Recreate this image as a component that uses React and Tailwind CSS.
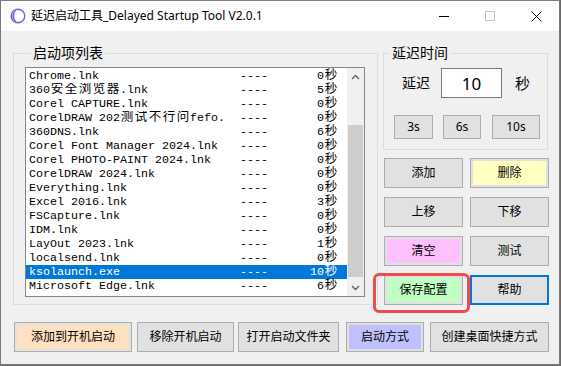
import React from "react";

const items = [
  { name: "Chrome.lnk", sec: 0 },
  { name: "360安全浏览器.lnk", sec: 5 },
  { name: "Corel CAPTURE.lnk", sec: 0 },
  { name: "CorelDRAW 202测试不行问fefo.", sec: 0 },
  { name: "360DNS.lnk", sec: 6 },
  { name: "Corel Font Manager 2024.lnk", sec: 0 },
  { name: "Corel PHOTO-PAINT 2024.lnk", sec: 0 },
  { name: "CorelDRAW 2024.lnk", sec: 0 },
  { name: "Everything.lnk", sec: 0 },
  { name: "Excel 2016.lnk", sec: 3 },
  { name: "FSCapture.lnk", sec: 0 },
  { name: "IDM.lnk", sec: 0 },
  { name: "LayOut 2023.lnk", sec: 1 },
  { name: "localsend.lnk", sec: 0 },
  { name: "ksolaunch.exe", sec: 10, selected: true },
  { name: "Microsoft Edge.lnk", sec: 6 },
];

// wide (CJK) glyphs take two cells in the listbox font
const Mono = ({ text }) =>
  Array.from(text).map((ch, i) =>
    ch.charCodeAt(0) > 0x2e80 ? (
      <span key={i} className="inline-block w-[14px] text-center text-[12.5px]">
        {ch}
      </span>
    ) : (
      <React.Fragment key={i}>{ch}</React.Fragment>
    )
  );

const Btn = ({ children, className = "", fill = "" }) => (
  <button className={`flex items-center justify-center border border-[#adadad] bg-[#e1e1e1] p-[2px] text-[12px] leading-none text-black ${className}`}>
    <span className={`flex h-full w-full items-center justify-center ${fill}`}>{children}</span>
  </button>
);

const Chevron = ({ up }) => (
  <svg width="9" height="6" viewBox="0 0 9 6">
    <path d={up ? "M1 5 L4.5 1.5 L8 5" : "M1 1 L4.5 4.5 L8 1"} fill="none" stroke="#606060" strokeWidth="1.4" />
  </svg>
);

const AppIcon = () => (
  <svg width="16" height="16" viewBox="0 0 16 16">
    <defs>
      <linearGradient id="ig" x1="0" y1="0" x2="1" y2="1">
        <stop offset="0" stopColor="#8a7cf0" />
        <stop offset="1" stopColor="#5b3fc9" />
      </linearGradient>
    </defs>
    <circle cx="8" cy="8" r="6.8" fill="#ffffff" stroke="#7a5fd6" strokeWidth="1.4" />
    <path d="M8 2.2 A5.8 5.8 0 0 0 8 13.8 A4.2 5.8 0 0 1 8 2.2 Z" fill="url(#ig)" />
    <path d="M8 2.2 A3.6 5.8 0 0 0 8 13.8 A5.8 5.8 0 0 1 8 2.2 Z" fill="url(#ig)" opacity="0.55" />
  </svg>
);

export default function App() {
  return (
    <div className="h-[366px] w-[561px] overflow-hidden bg-[#6b6b6b] font-['Noto_Sans','Noto_Sans_CJK_SC',sans-serif]">
      <div className="flex h-[365px] w-[560px] flex-col border border-[#7a7a7a] bg-[#f0f0f0]">
        {/* title bar */}
        <div className="flex h-[30px] items-center bg-white">
          <div className="ml-[9px] flex items-center">
            <AppIcon />
          </div>
          <span className="ml-[5px] text-[12px] leading-none text-black">延迟启动工具_Delayed Startup Tool V2.0.1</span>
          <div className="ml-auto flex h-full">
            <div className="flex w-[46px] items-center justify-center">
              <div className="h-px w-[10px] bg-black" />
            </div>
            <div className="flex w-[46px] items-center justify-center">
              <div className="h-[10px] w-[10px] border border-[#c4c4c4]" />
            </div>
            <div className="flex w-[46px] items-center justify-center">
              <svg width="11" height="11" viewBox="0 0 11 11">
                <path d="M0.5 0.5 L10.5 10.5 M10.5 0.5 L0.5 10.5" stroke="#000" strokeWidth="1" />
              </svg>
            </div>
          </div>
        </div>

        {/* body */}
        <div className="flex flex-col pl-[12px] pt-[13px]">
          <div className="flex">
            <fieldset className="w-[365px] border border-[#dcdcdc] pb-[6px] pl-[11px]">
              <legend className="ml-[6px] px-[2px] text-[14px] leading-[18px] text-black">启动项列表</legend>
              <div className="mt-[5px] flex h-[230px] w-[340px] border border-[#828790] bg-white">
                <div className="w-[321px] pt-[1px] font-['Liberation_Mono','Noto_Sans_CJK_SC',monospace] text-[11.67px] leading-[14px]">
                  {items.map((it) => (
                    <div
                      key={it.name}
                      className={`flex h-[14px] items-center whitespace-nowrap pl-[3px] ${it.selected ? "bg-[#0078d7] text-white" : "text-black"}`}
                    >
                      <span className="w-[211px] overflow-hidden">
                        <Mono text={it.name} />
                      </span>
                      <span className="w-[28px]">----</span>
                      <span className="flex-1 pr-[9px] text-right">
                        <Mono text={`${it.sec}秒`} />
                      </span>
                    </div>
                  ))}
                </div>
                <div className="flex w-[17px] flex-col bg-[#f0f0f0]">
                  <div className="flex h-[17px] items-center justify-center">
                    <Chevron up />
                  </div>
                  <div className="flex-1 px-[1px]">
                    <div className="mt-[40px] h-[152px] bg-[#cdcdcd]" />
                  </div>
                  <div className="flex h-[17px] items-center justify-center">
                    <Chevron />
                  </div>
                </div>
              </div>
            </fieldset>

            <div className="ml-[5px] flex w-[165px] flex-col">
              <fieldset className="border border-[#dcdcdc] pb-[10px]">
                <legend className="ml-[6px] px-[2px] text-[14px] leading-[18px] text-black">延迟时间</legend>
                <div className="mt-[6px] flex items-center pl-[18px]">
                  <span className="text-[14px] leading-none text-black">延迟</span>
                  <div className="ml-[11px] flex h-[30px] w-[61px] items-center justify-center border border-[#7a7a7a] bg-white text-[17px] leading-none text-black">
                    10
                  </div>
                  <span className="ml-[13px] text-[15px] leading-none text-black">秒</span>
                </div>
                <div className="mt-[17px] flex pl-[10px]">
                  <Btn className="h-[24px] w-[39px]">3s</Btn>
                  <Btn className="ml-[10px] h-[24px] w-[38px]">6s</Btn>
                  <Btn className="ml-[11px] h-[24px] w-[48px]">10s</Btn>
                </div>
              </fieldset>

              <div className="ml-[1px] mt-[8px] grid grid-cols-[79px_79px] gap-x-[7px] gap-y-[9px]">
                <Btn className="h-[30px]">添加</Btn>
                <Btn className="h-[30px]" fill="bg-[#ffffc0]">删除</Btn>
                <Btn className="h-[30px]">上移</Btn>
                <Btn className="h-[30px]">下移</Btn>
                <Btn className="h-[30px]" fill="bg-[#ffc0ff]">清空</Btn>
                <Btn className="h-[30px]">测试</Btn>
                <div className="relative">
                  <Btn className="h-[30px] w-full" fill="bg-[#c0ffc0]">保存配置</Btn>
                  <div className="pointer-events-none absolute -left-[11px] -top-[2px] h-[40px] w-[97px] rounded-[6px] border-[3px] border-[#f04b4b]" />
                </div>
                <button className="flex h-[30px] items-center justify-center border-2 border-[#0078d7] bg-[#e1e1e1] text-[12px] leading-none text-black">
                  帮助
                </button>
              </div>
            </div>
          </div>

          <div className="mt-[17px] flex">
            <Btn className="ml-[1px] h-[30px] w-[118px]" fill="bg-[#ffe0c0]">添加到开机启动</Btn>
            <Btn className="ml-[5px] h-[30px] w-[97px]">移除开机启动</Btn>
            <Btn className="ml-[4px] h-[30px] w-[101px]">打开启动文件夹</Btn>
            <Btn className="ml-[7px] h-[30px] w-[78px]" fill="bg-[#c0c0ff]">启动方式</Btn>
            <Btn className="ml-[6px] h-[30px] w-[119px]">创建桌面快捷方式</Btn>
          </div>
        </div>
      </div>
    </div>
  );
}
